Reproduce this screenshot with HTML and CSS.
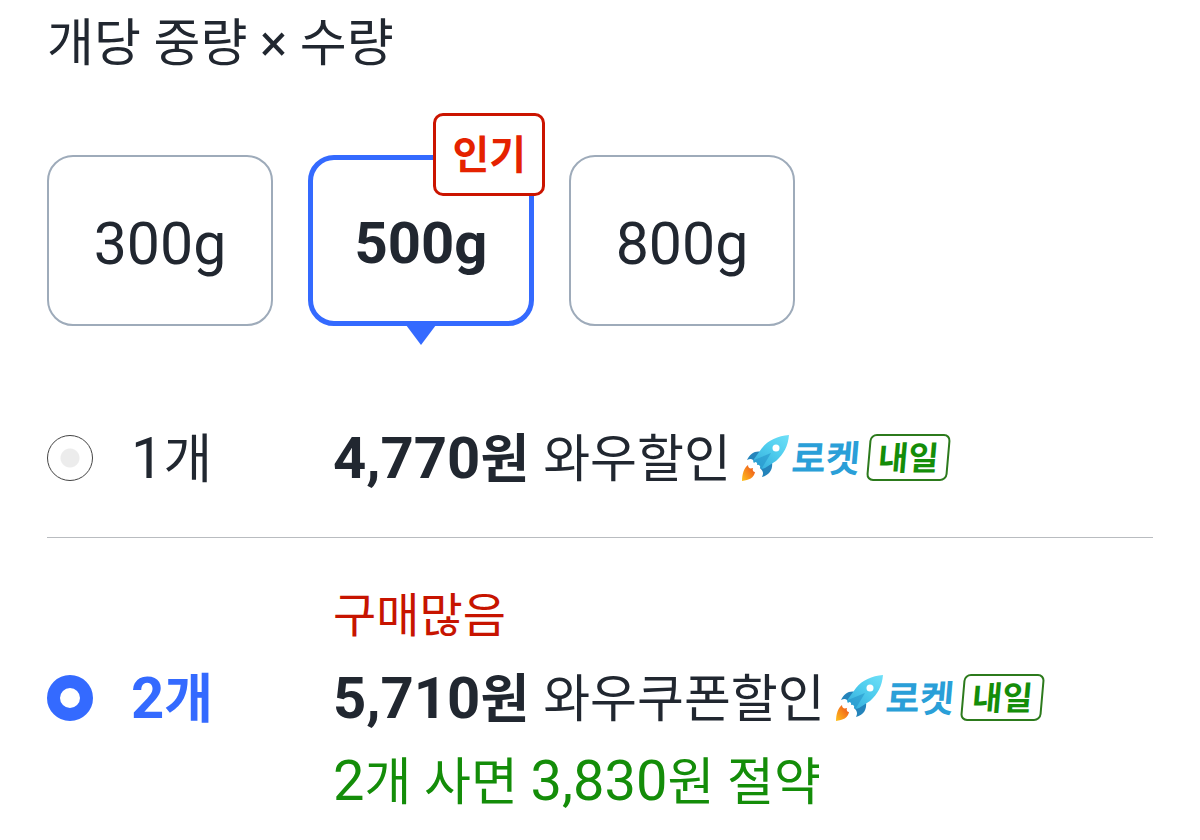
FILE: index.html
```html
<!DOCTYPE html>
<html lang="ko">
<head>
<meta charset="utf-8">
<meta name="viewport" content="width=device-width, initial-scale=1">
<title>개당 중량 × 수량</title>
<link rel="stylesheet" href="styles.css">
</head>
<body>
<svg width="0" height="0" class="defs" aria-hidden="true">
  <defs>
    <linearGradient id="hull" x1="1" y1="0" x2="0.2" y2="1">
      <stop offset="0" stop-color="#6fe0f8"/>
      <stop offset="0.5" stop-color="#4fcdee"/>
      <stop offset="1" stop-color="#38b0dd"/>
    </linearGradient>
    <linearGradient id="flame" x1="1" y1="0" x2="0" y2="1">
      <stop offset="0" stop-color="#e8491c"/>
      <stop offset="0.5" stop-color="#f7861c"/>
      <stop offset="1" stop-color="#fdc21c"/>
    </linearGradient>
    <symbol id="rocket" viewBox="0 0 48 48">
      <path fill="#2484bb" d="M20 18C14 16 8 19 5 26C9 24 11 25 12 28L20 24ZM30 28C31 35 28 41 20 43C22 39 21 37 18 34L22 28Z"/>
      <path fill="url(#hull)" d="M47 1C36 2 26 6 20 14L12 25C11 27 11 28 12 29C13 27 16 28 15 31C17 30 19 32 18 34C20 35 21 35 23 34L34 27C42 20 46 12 47 1Z"/>
      <path fill="#1f8cc6" opacity="0.5" d="M12 26L29 19L20 34C19 35 18 34 18 34C19 32 17 30 15 31C16 28 13 27 12 29Z"/>
      <circle cx="34" cy="14" r="3.500" fill="#fff"/>
      <path fill="url(#flame)" d="M6 31C2 34 0 40 0 47C7 46 12 44 13 38C12 38 10 37 11 34C8 35 6 34 6 31Z"/>
    </symbol>
  </defs>
</svg>
<main class="page">
  <h1 class="title">개당 중량 × 수량</h1>

  <div class="weights">
    <button type="button" class="weight">300g</button>
    <button type="button" class="weight weight-selected" aria-pressed="true">500g<span class="popular">인기</span></button>
    <button type="button" class="weight">800g</button>
  </div>

  <div class="options">
    <div class="option">
      <input class="radio" type="radio" name="count" id="count1">
      <label class="count" for="count1"><span class="num">1</span>개</label>
      <div class="details">
        <p class="line">
          <strong class="price"><span class="num">4,770</span>원</strong>
          <span class="discount">와우할인</span>
          <span class="delivery"><svg class="rocket" aria-hidden="true"><use href="#rocket"/></svg><span class="brand">로켓</span><span class="tag">내일</span></span>
        </p>
      </div>
    </div>
    <div class="option">
      <input class="radio" type="radio" name="count" id="count2" checked>
      <label class="count" for="count2"><span class="num">2</span>개</label>
      <div class="details">
        <p class="line hot">구매많음</p>
        <p class="line">
          <strong class="price"><span class="num">5,710</span>원</strong>
          <span class="discount">와우쿠폰할인</span>
          <span class="delivery"><svg class="rocket" aria-hidden="true"><use href="#rocket"/></svg><span class="brand">로켓</span><span class="tag">내일</span></span>
        </p>
        <p class="line"><span class="saving"><span class="num">2</span>개 사면 <span class="num">3,830</span>원 절약</span></p>
      </div>
    </div>
  </div>
</main>
</body>
</html>
```
FILE: styles.css
```css
* {
  box-sizing: border-box;
}

body {
  margin: 0;
  background: #fff;
  color: #212730;
  font-family: Roboto, "Noto Sans CJK KR", sans-serif;
  font-size: 51px;
}

.defs {
  position: absolute;
}

.page {
  padding: 0 47px;
}

.title {
  margin: 0;
  font-size: 51px;
  font-weight: 400;
  line-height: 88px;
}

.weights {
  display: flex;
  flex-wrap: wrap;
  gap: 35px;
  margin-top: 67px;
}

.weight {
  position: relative;
  min-width: 226px;
  padding: 51px 32px 45px;
  border: 2px solid #9eabba;
  border-radius: 26px;
  background: #fff;
  color: inherit;
  font-family: inherit;
  font-size: 59px;
  line-height: 71px;
}

.weight-selected {
  padding: 48px 29px 42px;
  border: 5px solid #346aff;
  font-size: 58px;
  font-weight: 700;
}

.weight-selected::after {
  content: "";
  position: absolute;
  top: 100%;
  left: 50%;
  margin-left: -18px;
  border: 18px solid transparent;
  border-top: 24px solid #346aff;
  border-bottom: 0;
}

.popular {
  position: absolute;
  top: -47px;
  right: -16px;
  padding: 2px 16px 0;
  border: 3px solid #cb1400;
  border-radius: 10px;
  background: #fff;
  color: #e52200;
  font-size: 40px;
  line-height: 75px;
}

.options {
  margin-top: 51px;
}

.option {
  display: grid;
  grid-template-columns: 46px 164px 1fr;
  column-gap: 38px;
  align-items: center;
  padding: 39px 0 38px;
}

.option + .option {
  padding-top: 35px;
  border-top: 1px solid #b9bcc0;
}

.radio {
  appearance: none;
  width: 46px;
  height: 46px;
  margin: 0;
  border: 1px solid #444;
  border-radius: 50%;
  background: radial-gradient(circle, #ececec 9px, #fff 10px);
}

.radio:checked {
  border: 13px solid #346aff;
  background: #fff;
}

.count,
.price,
.discount,
.saving {
  padding-top: 5px;
  line-height: 78px;
}

.count,
.price {
  font-size: 53px;
}

.num {
  font-size: 56px;
  line-height: 1;
}

.count .num,
.price .num {
  font-size: 58px;
}

.radio:checked + .count {
  color: #346aff;
  font-weight: 700;
}

.line {
  display: flex;
  align-items: center;
  margin: 0;
  line-height: 83px;
  white-space: nowrap;
}

.discount {
  margin-left: 14px;
}

.delivery {
  display: flex;
  align-items: center;
  margin-left: 11px;
  font-weight: 700;
}

.rocket {
  width: 48px;
  height: 48px;
}

.brand {
  padding-top: 5px;
  margin-left: 2px;
  color: #2a9fd8;
  font-size: 37px;
  line-height: 78px;
  transform: skewX(-5deg);
}

.tag {
  margin-left: 8px;
  padding: 2px 8px 0;
  border: 2px solid #2c7a1c;
  border-radius: 7px;
  color: #148d09;
  font-size: 33px;
  line-height: 41px;
  transform: skewX(-5deg);
}

.hot {
  padding-top: 2px;
  color: #c71400;
  font-size: 47px;
  line-height: 81px;
}

.saving {
  color: #148d09;
}
```
